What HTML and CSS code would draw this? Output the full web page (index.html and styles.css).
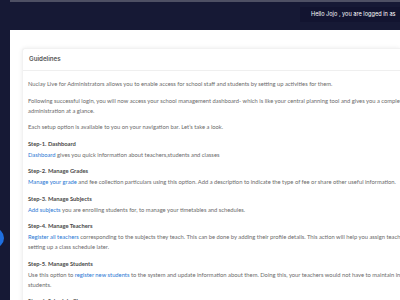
FILE: index.html
```html
<!DOCTYPE html>
<html>
<head>
<meta charset="utf-8">
<link rel="stylesheet" href="styles.css">
</head>
<body>
<div class="app">
  <aside class="sidebar"><span class="fab"></span></aside>
  <div class="main">
    <header class="topbar">
      <div class="login">Hello Jojo , you are logged in as</div>
    </header>
    <section class="content">
      <div class="card">
        <div class="card-head">Guidelines</div>
        <div class="card-body">
          <p>Nuclay Live for Administrators allows you to enable access for school staff and students by setting up activities for them.</p>
          <p>Following successful login, you will now access your school management dashboard- which is like your central planning tool and gives you a complete overview of school administration at a glance.</p>
          <p>Each setup option is available to you on your navigation bar. Let’s take a look.</p>
          <h4>Step-1. Dashboard</h4>
          <p><a>Dashboard</a> gives you quick information about teachers,students and classes</p>
          <h4>Step-2. Manage Grades</h4>
          <p><a>Manage your grade</a> and fee collection particulars using this option. Add a description to indicate the type of fee or share other useful information.</p>
          <h4>Step-3. Manage Subjects</h4>
          <p><a>Add subjects</a> you are enrolling students for, to manage your timetables and schedules.</p>
          <h4>Step-4. Manage Teachers</h4>
          <p><a>Register all teachers</a> corresponding to the subjects they teach. This can be done by adding their profile details. This action will help you assign teachers while<br>setting up a class schedule later.</p>
          <h4>Step-5. Manage Students</h4>
          <p>Use this option to <a>register new students</a> to the system and update information about them. Doing this, your teachers would not have to maintain individual records of students.</p>
          <h4>Step-6. Schedule Classes</h4>
        </div>
      </div>
    </section>
  </div>
</div>
</body>
</html>
```
FILE: styles.css
```css
* { box-sizing: border-box; }
html, body { margin: 0; padding: 0; }
body {
  width: 400px;
  height: 300px;
  overflow: hidden;
  background: #161935;
  font-family: "Lato", "Liberation Sans", sans-serif;
}
.app {
  display: flex;
  height: 300px;
}
.sidebar {
  width: 10px;
  flex: none;
  background: #161935;
  position: relative;
}
.fab {
  position: absolute;
  left: -16px;
  top: 228px;
  width: 20px;
  height: 20px;
  border-radius: 50%;
  background: #1f6fe0;
}
.main {
  flex: 1;
  min-width: 0;
  display: flex;
  flex-direction: column;
}
.topbar {
  height: 30px;
  flex: none;
  background: #161935;
  border-top: 2px solid #4e5064;
  display: flex;
  justify-content: flex-end;
  align-items: flex-start;
  padding-top: 5px;
}
.login {
  width: 100px;
  height: 15px;
  background: #121430;
  color: #fff;
  font-family: "Inter", "DejaVu Sans", sans-serif;
  font-size: 5.6px;
  line-height: 15px;
  padding-left: 11px;
  white-space: nowrap;
  overflow: hidden;
}
.content {
  flex: 1;
  background: #fff;
  padding: 18px 0 0 12px;
  overflow: hidden;
}
.card {
  background: #fff;
  border-radius: 3px 0 0 0;
  box-shadow: 0 0 4px rgba(0,0,0,0.08);
  border: 1px solid #f2f2f2;
  border-right: 0;
}
.card-head {
  height: 22px;
  padding-left: 6px;
  line-height: 20px;
  font-family: "Inter", "DejaVu Sans", sans-serif;
  font-weight: 600;
  font-size: 6.2px;
  color: #575757;
  border-bottom: 1px solid #efefef;
}
.card-body {
  padding: 8px 0 0 5px;
  font-size: 5.8px;
  line-height: 10px;
  color: #6b6b6b;
  white-space: nowrap;
}
.card-body p {
  margin: 0 0 6.5px;
  white-space: normal;
  width: 435px;
}
.card-body h4 {
  margin: 0 0 1px;
  font-size: 5.8px;
  font-weight: 700;
  color: #4a4a4a;
  line-height: 10px;
}
.card-body a {
  color: #2a78d4;
}
```
